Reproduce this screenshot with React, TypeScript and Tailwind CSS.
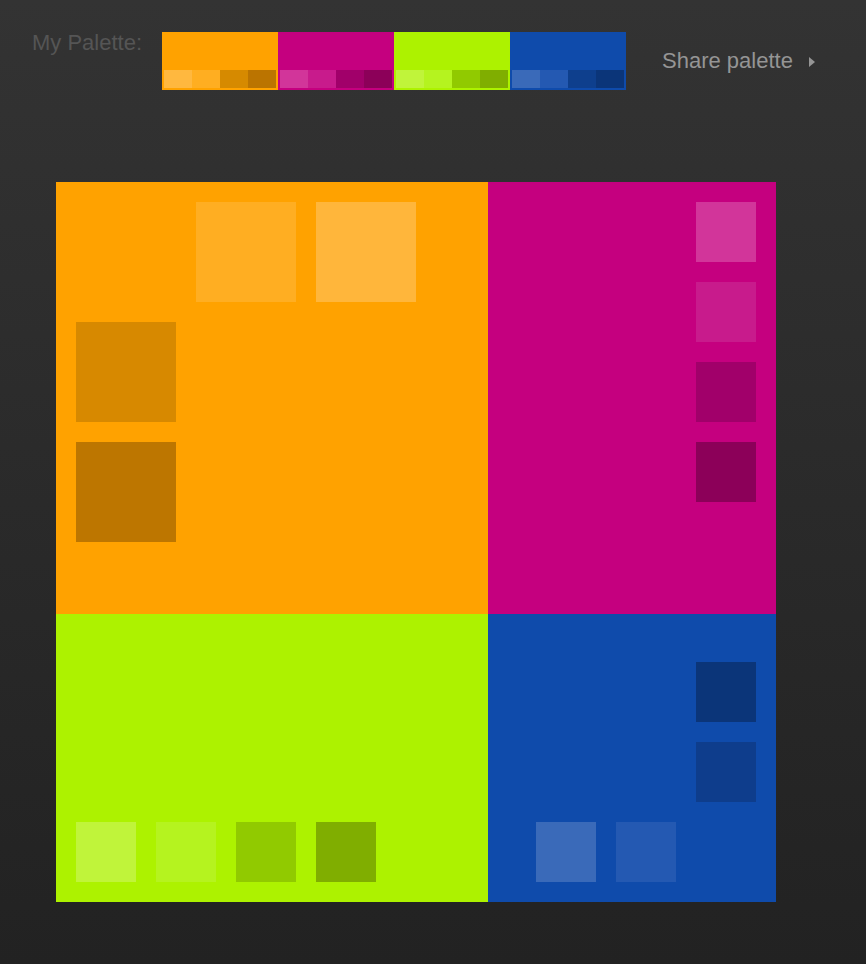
import React from "react";

type Swatch = { base: string; shades: string[] };

const palette: Swatch[] = [
  { base: "bg-[#ffa200]", shades: ["bg-[#ffb83f]", "bg-[#ffae21]", "bg-[#d68a00]", "bg-[#bb7400]"] },
  { base: "bg-[#c5007f]", shades: ["bg-[#d2359a]", "bg-[#c81b8c]", "bg-[#a1006a]", "bg-[#8c0059]"] },
  { base: "bg-[#adf200]", shades: ["bg-[#c0f43a]", "bg-[#b5f31f]", "bg-[#91ca00]", "bg-[#80ae00]"] },
  { base: "bg-[#0f4bab]", shades: ["bg-[#3a6ab9]", "bg-[#2459b2]", "bg-[#0e3f8d]", "bg-[#0b3579]"] },
];

function PaletteChip({ swatch }: { swatch: Swatch }) {
  return (
    <div className={`flex h-[58px] w-[116px] flex-col ${swatch.base}`}>
      <div className="flex-1" />
      <div className="flex h-[18px] px-[2px] mb-[2px]">
        {swatch.shades.map((s) => (
          <div key={s} className={`h-full w-[28px] ${s}`} />
        ))}
      </div>
    </div>
  );
}

export default function App() {
  return (
    <div
      className="h-[964px] w-full bg-gradient-to-b from-[#333333] to-[#222222]"
      style={{ fontFamily: '"Liberation Sans", Arial, sans-serif' }}
    >
      {/* header */}
      <div className="flex items-start pl-8 pt-8">
        <div className="w-[130px] text-[22px] leading-[22px] text-[#555555]">My Palette:</div>
        <div className="flex">
          {palette.map((p) => (
            <PaletteChip key={p.base} swatch={p} />
          ))}
        </div>
        <div className="ml-9 mt-[18px] flex items-center text-[22px] leading-[22px] text-[#959595]">
          <span>Share palette</span>
          <svg width="6" height="10" viewBox="0 0 6 10" className="ml-[16px] mt-[1px]">
            <path d="M0 0 L6 5 L0 10 Z" fill="#959595" />
          </svg>
        </div>
      </div>

      {/* canvas */}
      <div className="ml-14 mt-[92px] grid w-[720px] grid-cols-[432px_288px] grid-rows-[432px_288px]">
        {/* orange */}
        <div className="grid grid-cols-[repeat(3,100px)] grid-rows-[repeat(3,100px)] gap-5 bg-[#ffa200] p-5">
          <div />
          <div className="bg-[#ffae22]" />
          <div className="bg-[#ffb63b]" />
          <div className="bg-[#d78900]" />
          <div />
          <div />
          <div className="bg-[#bd7600]" />
        </div>

        {/* magenta */}
        <div className="flex flex-col items-end gap-5 bg-[#c5007f] p-5">
          <div className="h-[60px] w-[60px] bg-[#d2359a]" />
          <div className="h-[60px] w-[60px] bg-[#c81b8c]" />
          <div className="h-[60px] w-[60px] bg-[#a1006a]" />
          <div className="h-[60px] w-[60px] bg-[#8c0059]" />
        </div>

        {/* lime */}
        <div className="flex items-end gap-5 bg-[#adf200] p-5">
          <div className="h-[60px] w-[60px] bg-[#c0f43a]" />
          <div className="h-[60px] w-[60px] bg-[#b5f31f]" />
          <div className="h-[60px] w-[60px] bg-[#91ca00]" />
          <div className="h-[60px] w-[60px] bg-[#80ae00]" />
        </div>

        {/* blue */}
        <div className="grid content-end justify-end grid-cols-[repeat(3,60px)] grid-rows-[repeat(3,60px)] gap-5 bg-[#0f4bab] p-5">
          <div />
          <div />
          <div className="bg-[#0b3579]" />
          <div />
          <div />
          <div className="bg-[#0e3d8c]" />
          <div className="bg-[#3a6ab9]" />
          <div className="bg-[#2459b2]" />
          <div />
        </div>
      </div>
    </div>
  );
}
